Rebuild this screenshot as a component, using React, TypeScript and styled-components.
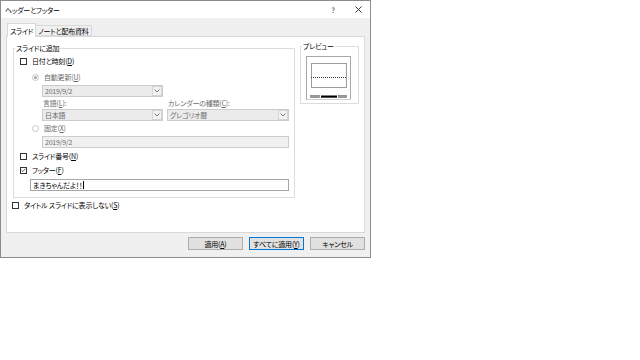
import React from "react";
import styled, { createGlobalStyle } from "styled-components";

const GlobalStyle = createGlobalStyle`
  html, body { margin: 0; padding: 0; background: #ffffff; }
  body {
    font-family: "Noto Sans CJK JP", "Noto Sans", sans-serif;
    font-size: 7px;
    line-height: 10px;
    color: #000000;
    letter-spacing: -0.2px;
    font-feature-settings: "palt";
  }
  * { box-sizing: border-box; }
  u { text-decoration-thickness: 1px; text-underline-offset: 1px; }
`;

const Dialog = styled.div`
  width: 371px;
  height: 258px;
  border: 1px solid #8c8c8c;
  background: #f0f0f0;
  display: flex;
  flex-direction: column;
`;

const TitleBar = styled.div`
  height: 17px;
  background: #ffffff;
  display: flex;
  align-items: center;
  padding-left: 4px;
`;

const TitleText = styled.span`
  flex: 1;
`;

const TitleButton = styled.span<{ $w: number }>`
  width: ${(p) => p.$w}px;
  height: 100%;
  display: flex;
  align-items: center;
  justify-content: center;
  color: #222;
`;

const Body = styled.div`
  padding: 5px 5px 0 5px;
  display: flex;
  flex-direction: column;
`;

const TabStrip = styled.div`
  display: flex;
  align-items: flex-end;
  height: 14px;
  margin-bottom: -1px;
  padding-left: 1px;
  position: relative;
  z-index: 1;
`;

const Tab = styled.div<{ $active?: boolean }>`
  height: ${(p) => (p.$active ? 14 : 11)}px;
  margin-bottom: ${(p) => (p.$active ? 0 : 1)}px;
  padding: 0 ${(p) => (p.$active ? 2 : 2)}px;
  background: ${(p) => (p.$active ? "#ffffff" : "#f0f0f0")};
  border: 1px solid #d9d9d9;
  border-bottom: ${(p) => (p.$active ? "none" : "1px solid #d9d9d9")};
  border-left: ${(p) => (p.$active ? "1px solid #d9d9d9" : "none")};
  display: flex;
  align-items: center;
  white-space: nowrap;
`;

const Panel = styled.div`
  height: 197px;
  background: #ffffff;
  border: 1px solid #d9d9d9;
  padding-left: 5px;
  display: flex;
  flex-direction: column;
`;

const TopRow = styled.div`
  display: flex;
  align-items: flex-start;
`;

const Group = styled.div<{ $w: number; $mt: number; $ml: number }>`
  position: relative;
  width: ${(p) => p.$w}px;
  margin-top: ${(p) => p.$mt}px;
  margin-left: ${(p) => p.$ml}px;
  border: 1px solid #dcdcdc;
`;

const Legend = styled.span`
  position: absolute;
  top: -6px;
  left: 1px;
  padding: 0 1px;
  background: #ffffff;
  line-height: 10px;
  white-space: nowrap;
`;

const GroupBody = styled.div`
  padding: 7px 5px 6px 0;
  display: flex;
  flex-direction: column;
`;

const Row = styled.div<{ $mt?: number; $indent: number; $gap?: number }>`
  display: flex;
  align-items: center;
  height: 10px;
  margin-top: ${(p) => p.$mt ?? 0}px;
  padding-left: ${(p) => p.$indent}px;
  gap: ${(p) => p.$gap ?? 5}px;
  white-space: nowrap;
`;

const FieldRow = styled.div<{ $mt: number; $indent: number }>`
  display: grid;
  grid-template-columns: 121px 122px;
  column-gap: 4px;
  margin-top: ${(p) => p.$mt}px;
  padding-left: ${(p) => p.$indent}px;
`;

const FieldLine = styled.div<{ $mt: number; $indent: number }>`
  display: flex;
  margin-top: ${(p) => p.$mt}px;
  padding-left: ${(p) => p.$indent}px;
`;

const Label = styled.span<{ $disabled?: boolean }>`
  color: ${(p) => (p.$disabled ? "#6d6d6d" : "#000000")};
  height: 10px;
  line-height: 10px;
  padding-left: 1px;
  white-space: nowrap;
`;

const CheckBox = styled.span`
  width: 7px;
  height: 7px;
  flex: none;
  border: 1px solid #333333;
  background: #ffffff;
  display: flex;
  align-items: center;
  justify-content: center;
`;

const Radio = styled.span<{ $on?: boolean }>`
  width: 7px;
  height: 7px;
  flex: none;
  border-radius: 50%;
  border: 1px solid #c6c6c6;
  background: #ffffff;
  display: flex;
  align-items: center;
  justify-content: center;
  &::after {
    content: "";
    display: ${(p) => (p.$on ? "block" : "none")};
    width: 3px;
    height: 3px;
    border-radius: 50%;
    background: #a3a3a3;
  }
`;

const Select = styled.div<{ $w?: number }>`
  width: ${(p) => (p.$w ? `${p.$w}px` : "100%")};
  height: 12px;
  border: 1px solid #cccccc;
  background: #ebebeb;
  color: #6d6d6d;
  display: flex;
  align-items: center;
  padding-left: 2px;
`;

const SelectValue = styled.span`
  flex: 1;
  line-height: 10px;
  white-space: nowrap;
`;

const SelectArrow = styled.span`
  width: 10px;
  height: 10px;
  border: 1px solid #d4d4d4;
  background: #f3f3f3;
  display: flex;
  align-items: center;
  justify-content: center;
`;

const TextBox = styled.div<{ $w: number; $disabled?: boolean }>`
  width: ${(p) => p.$w}px;
  height: 12px;
  border: 1px solid ${(p) => (p.$disabled ? "#cccccc" : "#a6a6a6")};
  background: ${(p) => (p.$disabled ? "#f0f0f0" : "#ffffff")};
  color: ${(p) => (p.$disabled ? "#6d6d6d" : "#000000")};
  display: flex;
  align-items: center;
  padding-left: 2px;
  white-space: nowrap;
`;

const Caret = styled.span`
  width: 1px;
  height: 8px;
  background: #000;
  margin-left: 1px;
`;

const PreviewBody = styled.div`
  height: 56px;
  padding: 9px 0 0 5px;
`;

const ButtonRow = styled.div`
  margin-top: 4px;
  display: flex;
  justify-content: flex-end;
  gap: 6px;
`;

const Button = styled.div<{ $focus?: boolean }>`
  width: 55px;
  height: 13px;
  background: #e1e1e1;
  border: 1px solid ${(p) => (p.$focus ? "#0078d7" : "#adadad")};
  display: flex;
  align-items: center;
  justify-content: center;
  white-space: nowrap;
`;

const Chevron = () => (
  <svg width="6" height="4" viewBox="0 0 6 4">
    <polyline points="0.5,0.5 3,3 5.5,0.5" fill="none" stroke="#7a7a7a" strokeWidth="1" />
  </svg>
);

const Check = () => (
  <svg width="7" height="7" viewBox="0 0 7 7">
    <polyline points="0.5,3 2.5,5 6,1" fill="none" stroke="#222" strokeWidth="1" />
  </svg>
);

const CloseIcon = () => (
  <svg width="7" height="7" viewBox="0 0 7 7">
    <line x1="0.5" y1="0.5" x2="6.5" y2="6.5" stroke="#222" strokeWidth="0.9" />
    <line x1="6.5" y1="0.5" x2="0.5" y2="6.5" stroke="#222" strokeWidth="0.9" />
  </svg>
);

const PreviewPicture = () => (
  <svg width="45" height="44" viewBox="0 0 45 44">
    <rect x="0.5" y="0.5" width="44" height="43" fill="#ffffff" stroke="#a8a8a8" />
    <line x1="1" y1="43.5" x2="45" y2="43.5" stroke="#d0d0d0" />
    <rect x="5.5" y="7.5" width="35" height="24" fill="none" stroke="#3a3a3a" strokeDasharray="1 1" />
    <line x1="5" y1="21.5" x2="41" y2="21.5" stroke="#3a3a3a" strokeDasharray="1 1" />
    <rect x="4.5" y="39.5" width="9" height="2" fill="#9a9a9a" stroke="#707070" strokeWidth="0.6" />
    <rect x="15" y="39.5" width="16" height="2.2" fill="#000000" />
    <rect x="32.5" y="39.5" width="8" height="2" fill="#9a9a9a" stroke="#707070" strokeWidth="0.6" />
  </svg>
);

export default function App() {
  return (
    <>
      <GlobalStyle />
      <Dialog>
        <TitleBar>
          <TitleText>ヘッダーとフッター</TitleText>
          <TitleButton $w={28}>?</TitleButton>
          <TitleButton $w={23}>
            <CloseIcon />
          </TitleButton>
        </TitleBar>
        <Body>
          <TabStrip>
            <Tab $active>スライド</Tab>
            <Tab>ノートと配布資料</Tab>
          </TabStrip>
          <Panel>
            <TopRow>
              <Group $w={282} $mt={11} $ml={1}>
                <Legend>スライドに追加</Legend>
                <GroupBody>
                  <Row $indent={6}>
                    <CheckBox />
                    <span>
                      日付と時刻(<u>D</u>)
                    </span>
                  </Row>
                  <Row $mt={6} $indent={18} $gap={4}>
                    <Radio $on />
                    <Label $disabled>
                      自動更新(<u>U</u>)
                    </Label>
                  </Row>
                  <FieldLine $mt={3} $indent={28}>
                    <Select $w={121}>
                      <SelectValue>2019/9/2</SelectValue>
                      <SelectArrow>
                        <Chevron />
                      </SelectArrow>
                    </Select>
                  </FieldLine>
                  <FieldRow $mt={1} $indent={28}>
                    <Label $disabled>
                      言語(<u>L</u>):
                    </Label>
                    <Label $disabled>
                      カレンダーの種類(<u>C</u>):
                    </Label>
                  </FieldRow>
                  <FieldRow $mt={1} $indent={28}>
                    <Select>
                      <SelectValue>日本語</SelectValue>
                      <SelectArrow>
                        <Chevron />
                      </SelectArrow>
                    </Select>
                    <Select>
                      <SelectValue>グレゴリオ暦</SelectValue>
                      <SelectArrow>
                        <Chevron />
                      </SelectArrow>
                    </Select>
                  </FieldRow>
                  <Row $mt={2} $indent={18} $gap={4}>
                    <Radio />
                    <Label $disabled>
                      固定(<u>X</u>)
                    </Label>
                  </Row>
                  <FieldLine $mt={3} $indent={28}>
                    <TextBox $w={247} $disabled>
                      2019/9/2
                    </TextBox>
                  </FieldLine>
                  <Row $mt={3} $indent={6}>
                    <CheckBox />
                    <span>
                      スライド番号(<u>N</u>)
                    </span>
                  </Row>
                  <Row $mt={4} $indent={6}>
                    <CheckBox>
                      <Check />
                    </CheckBox>
                    <span>
                      フッター(<u>F</u>)
                    </span>
                  </Row>
                  <FieldLine $mt={4} $indent={16}>
                    <TextBox $w={259}>
                      まきちゃんだよ！！
                      <Caret />
                    </TextBox>
                  </FieldLine>
                </GroupBody>
              </Group>
              <Group $w={59} $mt={9} $ml={5}>
                <Legend>プレビュー</Legend>
                <PreviewBody>
                  <PreviewPicture />
                </PreviewBody>
              </Group>
            </TopRow>
            <Row $mt={2} $indent={0}>
              <CheckBox />
              <span>
                タイトル スライドに表示しない(<u>S</u>)
              </span>
            </Row>
          </Panel>
          <ButtonRow>
            <Button>
              適用(<u>A</u>)
            </Button>
            <Button $focus>
              すべてに適用(<u>Y</u>)
            </Button>
            <Button>キャンセル</Button>
          </ButtonRow>
        </Body>
      </Dialog>
    </>
  );
}
